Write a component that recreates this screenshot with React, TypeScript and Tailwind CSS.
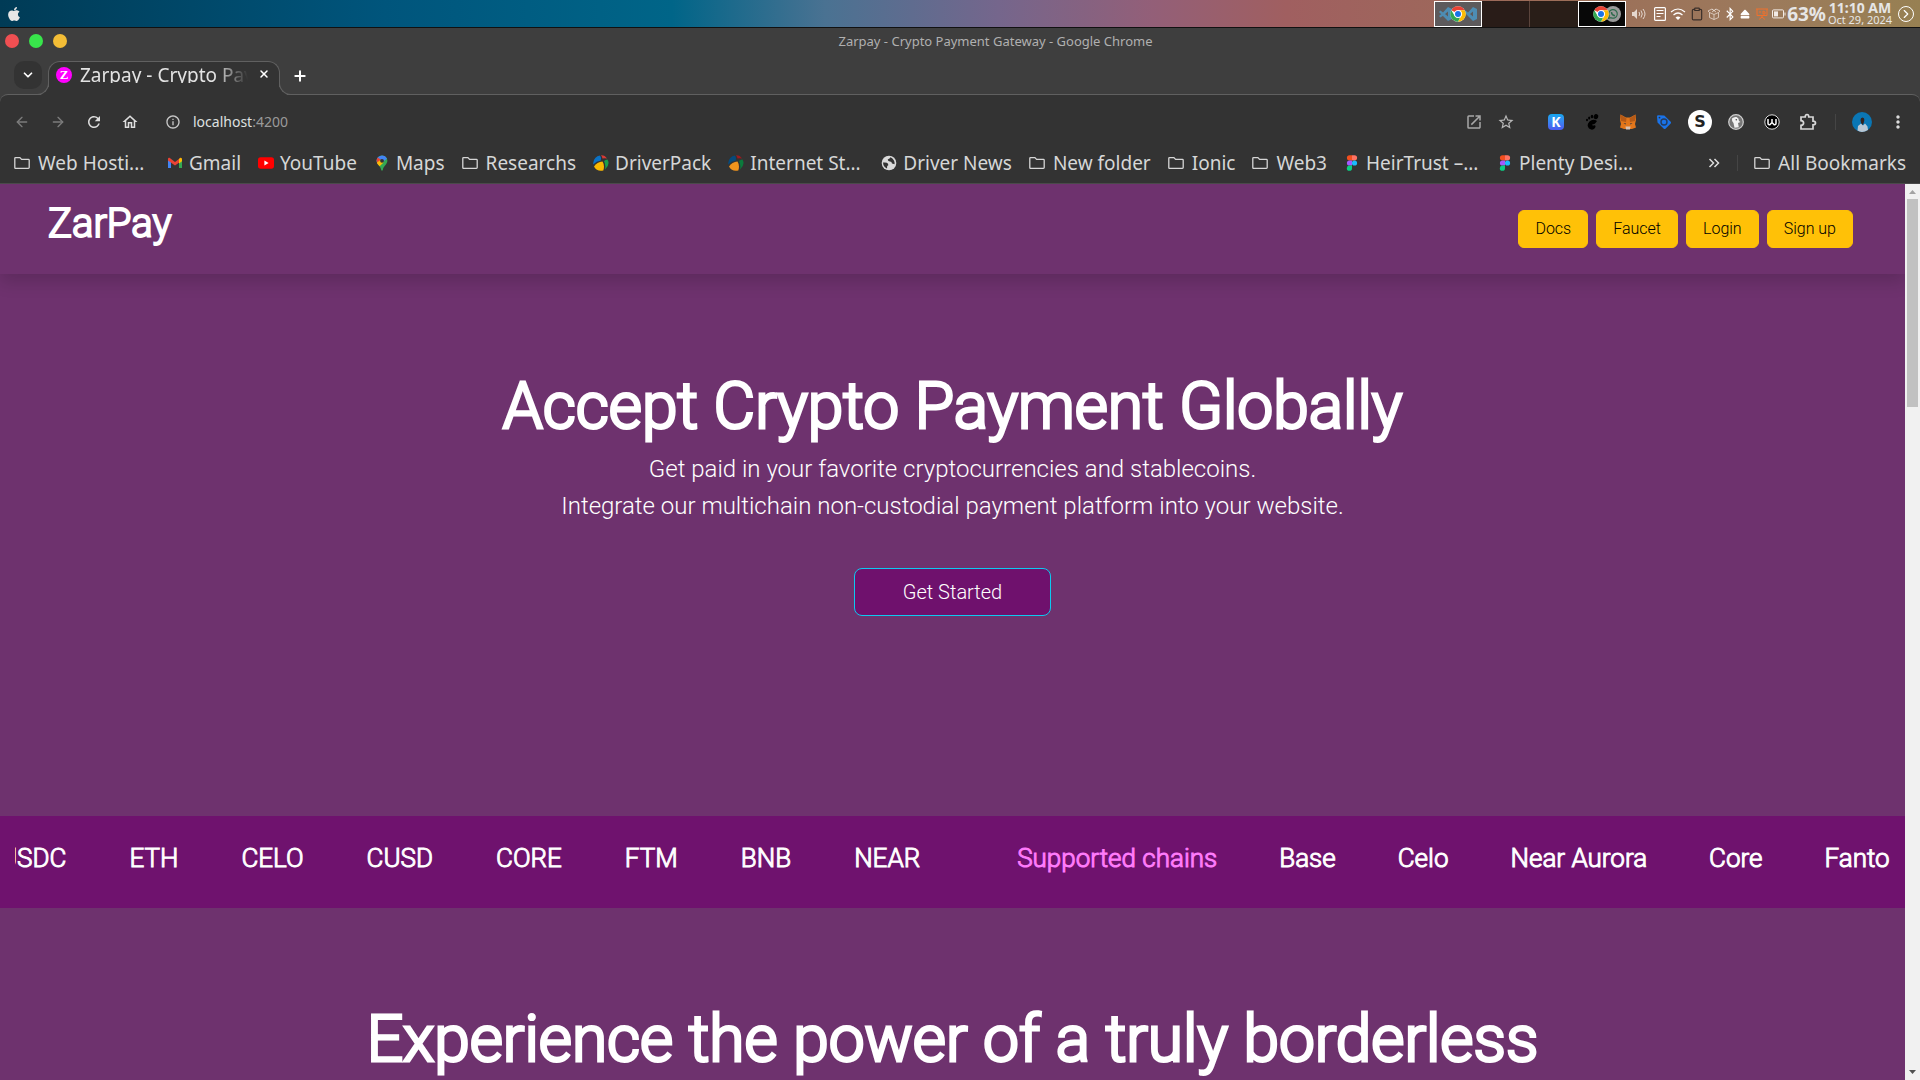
import React, { type ReactNode } from 'react';
import {
  ArrowLeft, ArrowRight, ChevronDown, ChevronRight, Clipboard, Plus, X,
} from 'lucide-react';
import { FaApple, FaBluetoothB, FaEject } from 'react-icons/fa';
import {
  MdInfoOutline, MdMoreVert, MdOpenInNew, MdOutlineHome, MdRefresh, MdStarBorder,
} from 'react-icons/md';

const chromeFont = "font-['Noto_Sans',sans-serif]";

function ChromeLogo({ className }: { className: string }) {
  return (
    <svg viewBox="0 0 48 48" className={className} aria-hidden="true">
      <circle cx="24" cy="24" r="23" fill="#fff" />
      <path d="M24 1a23 23 0 0 1 20 11.500H24a11.500 11.500 0 0 0-10 5.750L4 12.500A23 23 0 0 1 24 1z" fill="#ea4335" />
      <path d="M44 12.500A23 23 0 0 1 24 47l10-17.250a11.500 11.500 0 0 0 0-11.500L31 12.500z" fill="#fbbc05" />
      <path d="M24 47A23 23 0 0 1 4 12.500l10 17.250a11.500 11.500 0 0 0 10 5.750l6.500-.8z" fill="#34a853" />
      <circle cx="24" cy="24" r="11.500" fill="#fff" />
      <circle cx="24" cy="24" r="9" fill="#1a73e8" />
    </svg>
  );
}

function Folder() {
  return (
    <svg viewBox="0 0 16 16" className="h-4 w-4 shrink-0" fill="none" stroke="#d6d6d6" strokeWidth="1.300" aria-hidden="true">
      <path d="M.8 3.400q0-.8.8-.8h4.300l1.700 1.800h6.800q.8 0 .8.800v7.400q0 .8-.8.800H1.600q-.8 0-.8-.8z" />
    </svg>
  );
}

function Gmail() {
  return (
    <svg viewBox="0 0 16 16" className="h-4 w-4 shrink-0" aria-hidden="true">
      <path d="M1 4v9h3V6.800z" fill="#4285f4" />
      <path d="M15 4v9h-3V6.800z" fill="#34a853" />
      <path d="M1 4q0-1.500 1.500-1.200L8 7l5.500-4.200L15 4v1.500L8 10.500 1 5.500z" fill="#ea4335" />
      <path d="M12 4l1.500-1.200Q15 2.600 15 4.400v1.800l-3 2.200z" fill="#fbbc04" />
    </svg>
  );
}

function YouTube() {
  return (
    <svg viewBox="0 0 16 16" className="h-4 w-4 shrink-0" aria-hidden="true">
      <rect x="0" y="2.300" width="16" height="11.400" rx="2.600" fill="#f00" />
      <path d="M6.400 5.600v4.800L10.600 8z" fill="#fff" />
    </svg>
  );
}

function MapsPin() {
  return (
    <svg viewBox="0 0 16 16" className="h-4 w-4 shrink-0" aria-hidden="true">
      <path d="M8 .4a5.400 5.400 0 0 1 5.400 5.400c0 3.600-4 5-4.600 9.300q-.8 1.200-1.600 0C6.600 10.800 2.600 9.400 2.600 5.800A5.400 5.400 0 0 1 8 .4z" fill="#34a853" />
      <path d="M8 .4a5.400 5.400 0 0 1 5 3.400L4.600 10Q2.600 8 2.600 5.800A5.400 5.400 0 0 1 8 .4z" fill="#4285f4" />
      <path d="M3.800 2.400L8 5.800 4.600 10Q2.600 8 2.600 5.800q0-2 1.200-3.400z" fill="#ea4335" />
      <path d="M2.900 7.500L6.500 5l3 2.500-3.800 3.800Q3.500 9.500 2.900 7.500z" fill="#fbbc04" />
      <circle cx="8" cy="5.800" r="1.900" fill="#333" />
    </svg>
  );
}

function DriverPack({ dim = false }: { dim?: boolean }) {
  return (
    <svg viewBox="0 0 16 16" className="h-4 w-4 shrink-0" aria-hidden="true">
      <path d="M.2 8A8 8 0 0 1 7 .4q1.500 2 .8 5Q3.500 6 .2 9.600z" fill={dim ? '#064a7c' : '#0b72c4'} />
      <path d="M8 .2q4-.2 6 3.400Q12 2.800 9.500 3.600 9.200 1.500 8 .2z" fill={dim ? '#9e1b1e' : '#d93a35'} />
      <path d="M14.500 4.500q3 5-2.500 10 1-5-1-8.500 1.500-1.500 3.500-1.500z" fill={dim ? '#0b7a3c' : '#1ca04c'} />
      <path d="M1 11.500Q4 7 9.500 6.500q2.500 4 .8 9Q4 17 1 11.500z" fill={dim ? '#f0941d' : '#fbb900'} />
    </svg>
  );
}

function Globe() {
  return (
    <svg viewBox="0 0 16 16" className="h-4 w-4 shrink-0" aria-hidden="true">
      <circle cx="8" cy="8" r="7.300" fill="#dadada" />
      <path d="M2 7.600q4-.6 5 1.200t-.8 2.200l-.2 2.600Q2.300 12 2 7.600z" fill="#333" />
      <path d="M9.500 2.200l-1 1.400-1.800.8q.2 2 2.300 2 1.800.2 2 2l2.600.8Q14 4.500 9.500 2.200z" fill="#333" />
    </svg>
  );
}

function Figma() {
  return (
    <svg viewBox="0 0 16 16" className="h-4 w-4 shrink-0" aria-hidden="true">
      <path d="M8 .2H5.500a2.600 2.600 0 0 0 0 5.200H8z" fill="#f24e1e" />
      <path d="M8 .2h2.500a2.600 2.600 0 0 1 0 5.200H8z" fill="#ff7262" />
      <path d="M8 5.400H5.500a2.600 2.600 0 0 0 0 5.200H8z" fill="#a259ff" />
      <circle cx="10.500" cy="8" r="2.600" fill="#1abcfe" />
      <path d="M8 10.600H5.500A2.600 2.600 0 1 0 8 13.200z" fill="#0acf83" />
    </svg>
  );
}

const bookmarks: { label: string; icon: ReactNode; wide?: boolean; folder?: boolean }[] = [
  { label: 'Web Hosti...', icon: <Folder />, wide: true, folder: true },
  { label: 'Gmail', icon: <Gmail /> },
  { label: 'YouTube', icon: <YouTube /> },
  { label: 'Maps', icon: <MapsPin /> },
  { label: 'Researchs', icon: <Folder />, folder: true },
  { label: 'DriverPack', icon: <DriverPack /> },
  { label: 'Internet St...', icon: <DriverPack dim />, wide: true },
  { label: 'Driver News', icon: <Globe /> },
  { label: 'New folder', icon: <Folder />, folder: true },
  { label: 'Ionic', icon: <Folder />, folder: true },
  { label: 'Web3', icon: <Folder />, folder: true },
  { label: 'HeirTrust –...', icon: <Figma />, wide: true },
  { label: 'Plenty Desi...', icon: <Figma />, wide: true },
];

function SystemBar() {
  return (
    <div className="flex h-7 items-center border-b border-[#111] bg-[linear-gradient(to_right,#003b56_0%,#00557c_20%,#006588_35%,#4a7292_43%,#75668c_52%,#935f78_60%,#a05f60_67%,#9c6c58_80%,#9c7a5c_92%,#978052_100%)] pl-1.5 text-white">
      <button aria-label="Apple menu" className="flex h-5 w-4 items-center justify-center">
        <FaApple className="h-4 w-4 text-[#e6e6e6]" />
      </button>
      <div className="ml-auto flex h-[26px]">
        <button aria-label="Workspace 1" className="relative flex w-12 items-center justify-center border border-white bg-[#5d5a5c]">
          <svg viewBox="0 0 38 14" className="h-3.5 w-[38px]" aria-hidden="true">
            <path d="M9 0l4 2v10l-4 2L1 6 0 5l1.500-1.500L4 5.500 9 0zM9 4.500L6 7l3 2.500z" fill="#4d8db4" fillRule="evenodd" />
            <path d="M0 9l1.500 1.500L5 8 3.500 6z" fill="#4d8db4" />
            <path d="M34 0l4 2v10l-4 2-8-8-1-1 1.500-1.500L29 5.500zM34 4.500L31 7l3 2.500z" fill="#4d8db4" fillRule="evenodd" />
            <path d="M18.500 0h1v14h-1z" fill="#d0d0d0" />
          </svg>
          <span className="absolute inset-0 flex items-center justify-center">
            <ChromeLogo className="h-4 w-4" />
          </span>
        </button>
        <button aria-label="Workspace 2" className="w-12 border-r border-[#5b443c] bg-[#291c18]" />
        <button aria-label="Workspace 3" className="w-12 bg-[#291e18]" />
        <button aria-label="Workspace 4" className="flex w-12 items-center justify-end border border-white bg-[#080808] pr-1">
          <ChromeLogo className="z-10 -mr-1 h-4 w-4" />
          <svg viewBox="0 0 16 16" className="h-4 w-4" aria-hidden="true">
            <circle cx="8" cy="8" r="8" fill="#9a9a9a" />
            <path d="M3.600 12.400l.7-2.300a4.300 4.300 0 1 1 1.700 1.600z" fill="none" stroke="#2f6b4c" strokeWidth="1.200" />
            <path d="M6.500 6q0 3 3.500 3.800" fill="none" stroke="#2f6b4c" strokeWidth="1.500" />
          </svg>
        </button>
      </div>
      <div className="flex items-center pl-1.5">
        <svg viewBox="0 0 16 16" className="mr-1.5 h-4 w-4" fill="none" stroke="#e5d8cf" aria-hidden="true">
          <path d="M0 6h2l3-3v10l-3-3H0z" fill="#e5d8cf" stroke="none" />
          <path d="M7 6q1.500 2 0 4M9 4.500q2.500 3.500 0 7M11 3q4 5 0 10" />
        </svg>
        <svg viewBox="0 0 12 14" className="mr-1 h-3.5 w-3" fill="none" stroke="#fff" aria-hidden="true">
          <rect x=".6" y=".6" width="10.800" height="12.800" rx="1" strokeWidth="1.200" />
          <path d="M2.500 3.500h7M2.500 6.500h7M2.500 9.500h4" />
        </svg>
        <svg viewBox="0 0 16 14" className="mr-1 h-3.5 w-4" fill="none" stroke="#fff" strokeWidth="1.200" aria-hidden="true">
          <path d="M1 5q7-6 14 0M3.500 8q4.500-4 9 0" />
          <path d="M5.500 10.500q2.500-2 5 0L8 13z" fill="#fff" stroke="none" />
        </svg>
        <Clipboard className="mr-1 h-4 w-3.5 text-[#3a2f2a]" />
        <svg viewBox="0 0 12 12" className="mr-1 h-3 w-3" fill="none" stroke="#e5d8cf" strokeWidth=".8" aria-hidden="true">
          <path d="M1.500 4.500L6 6.500l4.500-2v5L6 11.500l-4.500-2zM6 6.500v5M1.500 4.500L0 3l4-2 2 2 2-2 4 2-1.500 1.500M4 1l4 3M8 1L4 4" />
        </svg>
        <FaBluetoothB className="mr-1 h-3.5 w-3" />
        <FaEject className="mr-1.5 h-2.5 w-2.5" />
        <svg viewBox="0 0 12 12" className="mr-1 h-3 w-3" fill="none" stroke="#f0702c" aria-hidden="true">
          <path d="M0 1h12M1 1v6.500h10V1M6 7.500V10M3 11.500L6 9l3 2.500M3 4h2M7 3v3h2V4z" />
        </svg>
        <svg viewBox="0 0 14 10" className="mr-px h-2.5 w-3.5" aria-hidden="true">
          <rect x=".5" y=".9" width="11" height="8" rx="1" fill="none" stroke="#f2ebe6" />
          <rect x="2" y="2.400" width="4" height="5" fill="#f2ebe6" />
          <rect x="12.500" y="3.500" width="1" height="3" fill="#f2ebe6" />
        </svg>
        <span className="mr-0.5 text-[19px] leading-6 font-bold text-[#e6e6e6]">63%</span>
        <span className="flex w-16 flex-col items-center whitespace-nowrap text-[#e6e6e6]">
          <span className="text-sm leading-[13px] font-bold">11:10 AM</span>
          <span className="text-[11px] leading-[12px]">Oct 29, 2024</span>
        </span>
        <button aria-label="Show panel" className="mx-1.5 flex h-4 w-4 items-center justify-center rounded-full border border-white">
          <ChevronRight className="h-3.5 w-3.5" />
        </button>
      </div>
    </div>
  );
}

function TitleBar() {
  return (
    <div className="grid grid-cols-[1fr_auto_1fr] items-center px-[5px] pt-px">
      <div className="flex gap-2.5">
        <button aria-label="Close window" className="h-3.5 w-3.5 rounded-full bg-[#f04f52]" />
        <button aria-label="Minimize window" className="h-3.5 w-3.5 rounded-full bg-[#38e54b]" />
        <button aria-label="Maximize window" className="h-3.5 w-3.5 rounded-full bg-[#f3bd36]" />
      </div>
      <p className="pl-[71px] text-[13px] leading-6 text-[#b0b0b0]">Zarpay - Crypto Payment Gateway - Google Chrome</p>
    </div>
  );
}

function TabStrip() {
  return (
    <div className="relative z-10 flex h-[41px] items-end pl-3.5">
      <button aria-label="Search tabs" className="mb-[5px] flex h-7 w-7 items-center justify-center rounded-[10px] bg-[#333] text-white">
        <ChevronDown className="h-3.5 w-3.5" strokeWidth={3} />
      </button>
      <div className="relative -mb-px ml-1.5 flex h-[34px] w-[232px] items-start rounded-t-xl border border-b-0 border-[#606060] bg-[#333] pt-1 pl-[7px]">
        <span className="absolute bottom-0 -left-3 h-3 w-3 rounded-br-xl border-r border-b border-[#606060] shadow-[4px_4px_0_0_#333] [clip-path:inset(0_-1px_0_0)]" />
        <span className="absolute -right-3 bottom-0 h-3 w-3 rounded-bl-xl border-b border-l border-[#606060] shadow-[-4px_4px_0_0_#333] [clip-path:inset(0_0_0_-1px)]" />
        <span className="mt-px flex h-4 w-4 items-center justify-center rounded-full bg-[#f0f] font-['Liberation_Serif',serif] text-[13px] leading-4 font-bold text-white">Z</span>
        <span className="ml-2 h-[17px] w-[168px] overflow-hidden text-[19px] leading-[18px] whitespace-nowrap text-[#e3e3e3] [mask-image:linear-gradient(to_right,#000_80%,transparent)]">
          Zarpay - Crypto Payment Gateway
        </span>
        <button aria-label="Close tab" className="ml-2 flex h-4 w-4 items-center justify-center text-white">
          <X className="h-3 w-3" strokeWidth={3} />
        </button>
      </div>
      <button aria-label="New tab" className="mb-2.5 ml-3 flex h-4 w-4 items-center justify-center text-white">
        <Plus className="h-4 w-4" strokeWidth={3} />
      </button>
    </div>
  );
}

function Extensions() {
  const slot = 'flex h-9 w-9 items-center justify-center';
  return (
    <div className="flex items-center">
      <button aria-label="K wallet" className={slot}>
        <span className="flex h-4 w-4 items-center justify-center rounded-sm bg-linear-to-b from-[#10a8f0] to-[#4a5af0] text-sm leading-4 font-bold text-white">K</span>
      </button>
      <button aria-label="GNOME Shell integration" className={slot}>
        <svg viewBox="0 0 16 16" className="h-4 w-4" aria-hidden="true">
          <ellipse cx="12" cy="2.600" rx="2.200" ry="2.600" transform="rotate(20 12 2.600)" />
          <ellipse cx="8" cy="2.600" rx="1.300" ry="1.800" />
          <ellipse cx="5.200" cy="4" rx="1.100" ry="1.500" />
          <ellipse cx="3" cy="6" rx="1" ry="1.300" />
          <path d="M13 7Q9 4.500 5.500 7.500 2 11 5 14.500q3.500 2.500 6-.5 1.500-3-1.200-2.600-1.800.6-1.600-.8Q11 10.500 13 7z" />
        </svg>
      </button>
      <button aria-label="MetaMask" className={slot}>
        <svg viewBox="0 0 16 16" className="h-4 w-4" aria-hidden="true">
          <path d="M.5.5L6 3.500h4L15.500.5 16 6l-1 4 1 3.500-4 1.500H4L0 13.500 1 10 0 6z" fill="#e2761b" />
          <path d="M.5.5L6.500 4.500 6 8 1 7zM15.500.5l-6 4L10 8l5-1z" fill="#b65a17" />
          <path d="M5.500 12.500h5L10 15.500H6z" fill="#d7c1b3" />
          <path d="M3.500 9l2.500.5-.5 1zM12.500 9L10 9.500l.5 1z" fill="#233447" />
        </svg>
      </button>
      <button aria-label="Tag assistant" className={slot}>
        <svg viewBox="0 0 16 16" className="h-4 w-4" aria-hidden="true">
          <path d="M1 2.500Q1 1.200 2.300 1.200l6 .3 6.400 6.300q.8.900 0 1.700L9.500 14.700q-1 .8-1.700 0L1.500 8.400z" fill="#1a73e8" />
          <circle cx="8" cy="8" r="3" fill="none" stroke="#243b5e" strokeWidth="1.400" />
          <circle cx="3.500" cy="3.600" r=".9" fill="#333" />
        </svg>
      </button>
      <button aria-label="S extension" className={slot}>
        <span className="flex h-6 w-6 items-center justify-center rounded-full bg-white font-['DejaVu_Sans',sans-serif] text-base leading-6 font-bold text-[#222]">S</span>
      </button>
      <button aria-label="Privacy extension" className={slot}>
        <svg viewBox="0 0 16 16" className="h-4 w-4" aria-hidden="true">
          <circle cx="8" cy="8" r="7.300" fill="#777" stroke="#d0d0d0" strokeWidth="1.200" />
          <path d="M4 4.500Q6 2.500 8.500 3q2.500 1 2.500 4l1.500 1-2.500 1 .8 4.200-4.300.6L5.500 9Q3.500 7.500 4 4.500z" fill="#f2f2f2" />
          <circle cx="8.300" cy="5.800" r=".8" fill="#444" />
        </svg>
      </button>
      <button aria-label="W extension" className={slot}>
        <svg viewBox="0 0 16 16" className="h-4 w-4" aria-hidden="true">
          <circle cx="8" cy="8" r="7.200" fill="#000" stroke="#ddd" />
          <path d="M4 5v4.500q0 1.200 1.200 1.200h.6L8 8.500l2.200 2.200h.6q1.200 0 1.200-1.200V5M8 5v4" fill="none" stroke="#fff" strokeWidth="1.500" />
        </svg>
      </button>
      <button aria-label="Extensions" className={slot}>
        <svg viewBox="0 0 18 18" className="h-[18px] w-[18px]" fill="none" stroke="#d8d8d8" strokeWidth="1.700" aria-hidden="true">
          <path d="M2 4h4.200q0-2.500 1.800-2.500T9.800 4H14v4.200q2.500 0 2.500 1.800T14 11.800V16H2v-3.600q2.600-.2 2.600-2.400T2 7.600z" />
        </svg>
      </button>
      <span className="mr-2 ml-[9px] h-4 w-px bg-[#454545]" />
      <button aria-label="Profile" className={slot}>
        <svg viewBox="0 0 20 20" className="h-5 w-5" aria-hidden="true">
          <circle cx="10" cy="10" r="10" fill="#0a76b4" />
          <path d="M5.500 18.500l.5-4.500 3-2.500 2 2 2-2 2.500 3 .5 3.500Q10 21.500 5.500 18.500z" fill="#b9c7d4" />
          <path d="M8.500 8q0-2.500 2-2.500t1.800 2.500-1.600 5Q8.500 11.500 8.500 8z" fill="#33231f" />
        </svg>
      </button>
      <button aria-label="Browser menu" className={slot}>
        <MdMoreVert className="h-5 w-5 text-[#dcdcdc]" />
      </button>
    </div>
  );
}

function Toolbar() {
  const nav = 'flex h-9 w-9 items-center justify-center';
  return (
    <div className="flex items-center rounded-t-lg border-t border-[#606060] bg-[#333] px-1 pt-[9px]">
      <button aria-label="Back" className={nav}><ArrowLeft className="h-4 w-4 text-[#7c7c7c]" /></button>
      <button aria-label="Forward" className={nav}><ArrowRight className="h-4 w-4 text-[#7c7c7c]" /></button>
      <button aria-label="Reload" className={nav}><MdRefresh className="h-[18px] w-[18px] text-[#dedede]" /></button>
      <button aria-label="Home" className={nav}><MdOutlineHome className="h-[18px] w-[18px] text-[#dedede]" /></button>
      <button aria-label="Site information" className="ml-4 flex h-4 w-[18px] items-center justify-center"><MdInfoOutline className="h-4 w-4 text-[#c8c8c8]" /></button>
      <p className="ml-[11px] flex-1 text-sm text-[#dfe0e0]">localhost<span className="text-[#9a9a9a]">:4200</span></p>
      <button aria-label="Open in app" className="flex h-8 w-8 items-center justify-center"><MdOpenInNew className="h-[18px] w-[18px] text-[#a8a8a8]" /></button>
      <button aria-label="Bookmark this page" className="mr-4 flex h-8 w-8 items-center justify-center"><MdStarBorder className="h-[18px] w-[18px] text-[#b8b8b8]" /></button>
      <Extensions />
    </div>
  );
}

function BookmarksBar() {
  return (
    <div className="flex h-11 items-center border-b border-[#4a4a4a] bg-[#333] px-3.5 pt-[3px] text-[19px] whitespace-nowrap text-[#d6d7d7]">
      <nav aria-label="Bookmarks" className="flex gap-[17px]">
        {bookmarks.map((b) => (
          <a key={b.label} href="#" className={`flex items-center ${b.folder ? 'gap-2' : 'gap-1.5'} ${b.wide ? 'min-w-[136px]' : ''}`}>
            {b.icon}
            {b.label}
          </a>
        ))}
      </nav>
      <button aria-label="More bookmarks" className="ml-auto flex h-4 w-4 items-center justify-center">
        <svg viewBox="0 0 12 10" className="h-2.5 w-3" fill="none" stroke="#dedede" strokeWidth="1.500" aria-hidden="true">
          <path d="M1.500 1l4 4-4 4M6.500 1l4 4-4 4" />
        </svg>
      </button>
      <span className="mr-4 ml-[15px] h-4 w-px bg-[#454545]" />
      <a href="#" className="flex items-center gap-2">
        <Folder />
        All Bookmarks
      </a>
    </div>
  );
}

const navLinks = ['Docs', 'Faucet', 'Login', 'Sign up'];
const tokens = ['USDC', 'ETH', 'CELO', 'CUSD', 'CORE', 'FTM', 'BNB', 'NEAR'];
const chains = ['Base', 'Celo', 'Near Aurora', 'Core', 'Fantom'];

function Page() {
  return (
    <main className="flex min-w-0 flex-1 flex-col overflow-hidden bg-[#6e326e] font-['Roboto',sans-serif] font-light text-white">
      <header className="flex items-center justify-between px-12 py-3.5 shadow-[0_8px_16px_rgba(0,0,0,0.15)]">
        <a href="#" className="mb-2.5 text-[40px] leading-[52px] [-webkit-text-stroke:2px_#fff]">ZarPay</a>
        <nav aria-label="Main" className="mr-1 flex gap-2">
          {navLinks.map((label) => (
            <a key={label} href="#" className="rounded-md border border-[#ffc107] bg-[#ffc107] px-4 py-1.5 text-base text-black">{label}</a>
          ))}
        </nav>
      </header>
      <section className="flex flex-col items-center pt-[91px] text-center">
        <h1 className="text-[64px] leading-[84px] [-webkit-text-stroke:3px_#fff]">Accept Crypto Payment Globally</h1>
        <p className="mt-0.5 text-2xl leading-[37px]">
          Get paid in your favorite cryptocurrencies and stablecoins.
          <br />
          Integrate our multichain non-custodial payment platform into your website.
        </p>
        <button className="mt-[43px] rounded-lg border border-[#0dcaf0] bg-[#6f116d] px-12 py-2 text-xl leading-[30px]">Get Started</button>
      </section>
      <section aria-label="Supported tokens and chains" className="mt-[200px] bg-[#6f126e] px-[15px] pt-[25px] pb-[33px] text-[26px] leading-[34px] [-webkit-text-stroke:1px_currentColor]">
        <div className="flex gap-[63px] overflow-hidden whitespace-nowrap">
          <ul className="-ml-[15px] flex gap-[63px]">
            {tokens.map((t) => <li key={t}>{t}</li>)}
          </ul>
          <ul className="ml-[34px] flex gap-[62px]">
            <li className="text-[#ff7bfb]">Supported chains</li>
            {chains.map((c) => <li key={c}>{c}</li>)}
          </ul>
        </div>
      </section>
      <section className="pt-[90px] text-center">
        <h2 className="text-[64px] leading-[84px] whitespace-nowrap [-webkit-text-stroke:3px_#fff]">Experience the power of a truly borderless</h2>
      </section>
    </main>
  );
}

function Scrollbar() {
  return (
    <div aria-hidden="true" className="flex w-[15px] shrink-0 flex-col items-center bg-[#f1f1f1]">
      <svg viewBox="0 0 15 15" className="h-[15px] w-[15px]"><path d="M4 10h7L7.500 6z" fill="#a3a3a3" /></svg>
      <div className="h-52 w-[11px] bg-[#c1c1c1]" />
      <svg viewBox="0 0 15 15" className="mt-auto h-[15px] w-[15px]"><path d="M4 5h7L7.500 9z" fill="#505050" /></svg>
    </div>
  );
}

export default function App() {
  return (
    <div className={`flex h-screen flex-col overflow-hidden bg-[#3e3e3e] ${chromeFont}`}>
      <SystemBar />
      <TitleBar />
      <TabStrip />
      <Toolbar />
      <BookmarksBar />
      <div className="flex min-h-0 flex-1">
        <Page />
        <Scrollbar />
      </div>
    </div>
  );
}
